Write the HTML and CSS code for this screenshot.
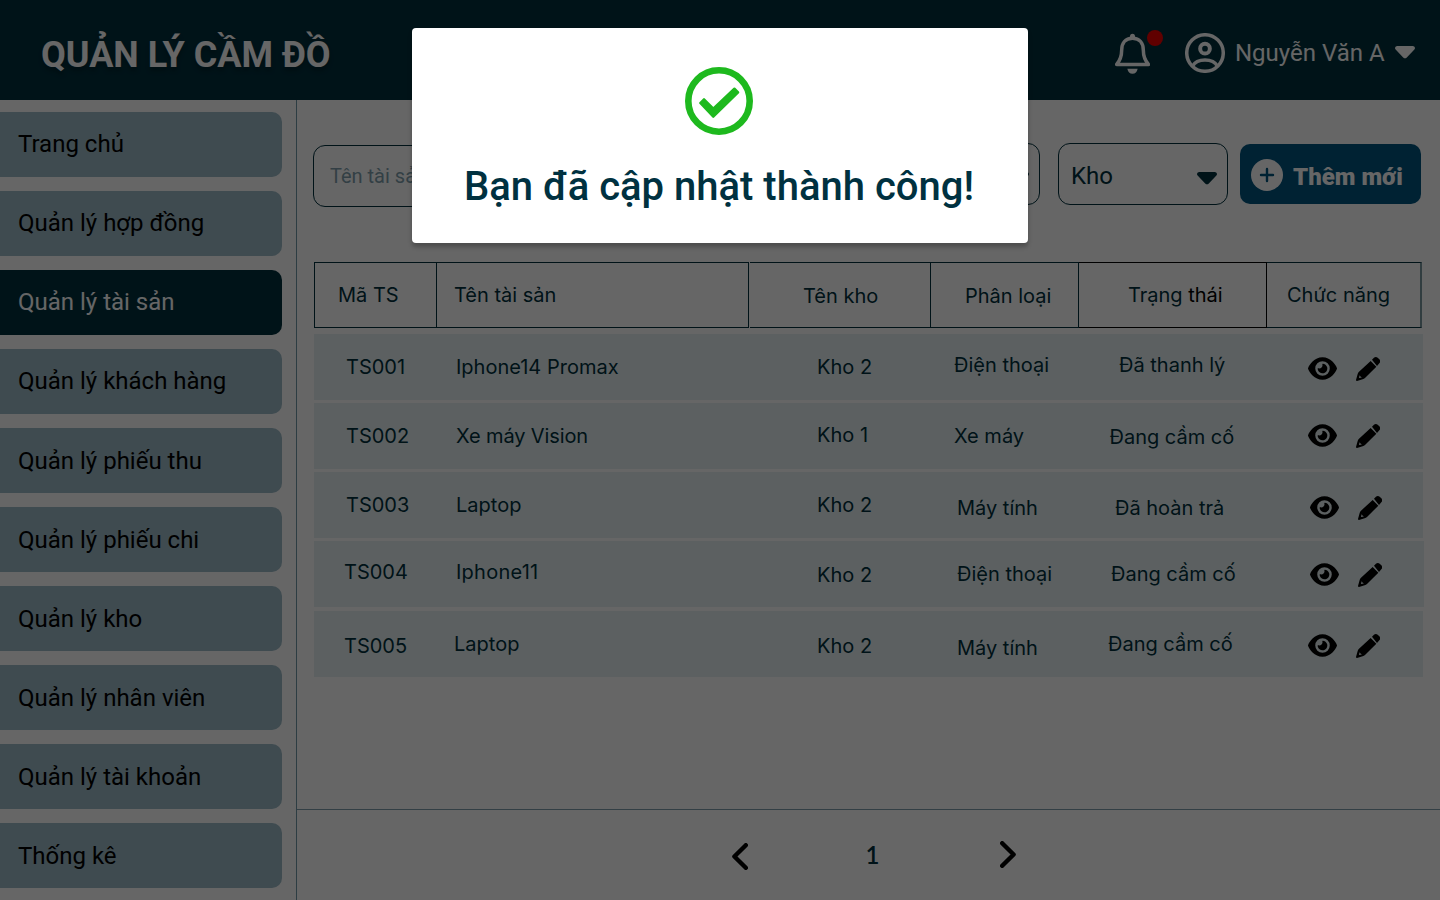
FILE: index.html
```html
<!DOCTYPE html>
<html lang="vi">
<head>
<meta charset="utf-8">
<title>Quản lý cầm đồ</title>
<link rel="stylesheet" href="styles.css">
</head>
<body>
<svg class="sprite" width="0" height="0">
  <symbol id="eye" viewBox="0 32 576 448"><path d="M288 32c-80.800 0-145.500 36.800-192.600 80.600C48.600 156 17.300 208 2.500 243.700c-3.300 7.900-3.300 16.700 0 24.600C17.300 304 48.600 356 95.400 399.400C142.500 443.200 207.200 480 288 480s145.500-36.800 192.600-80.600c46.800-43.500 78.100-95.400 93-131.100c3.300-7.900 3.300-16.700 0-24.600c-14.900-35.700-46.200-87.700-93-131.100C433.500 68.800 368.800 32 288 32zM144 256a144 144 0 1 1 288 0 144 144 0 1 1 -288 0zm144-64c0 35.300-28.700 64-64 64c-7.100 0-13.900-1.200-20.300-3.300c-5.500-1.800-11.900 1.600-11.700 7.400c.3 6.900 1.300 13.800 3.200 20.700c13.700 51.200 66.400 81.600 117.600 67.900s81.600-66.400 67.900-117.600c-11.100-41.500-47.800-69.400-88.600-71.100c-5.800-.2-9.200 6.100-7.400 11.700c2.100 6.400 3.300 13.200 3.300 20.300z"/></symbol>
  <symbol id="pencil" viewBox="0 0 72 72"><path d="M48 8l5-5q6-5 12-1l5 5q5 6 0 12l-7 8z"/><path fill-rule="evenodd" d="M44 12l17 17-34 34q-3 3-7 4L3 72q-3 0-3-3L5 51q1-4 4-7zM11 55l-2 7 2 1 7-2-4-2z"/></symbol>
  <symbol id="caret" viewBox="0 0 20 13"><path d="M2 0h16q2 .3 2 2 0 .8-.6 1.400l-7.600 8q-1.800 1.800-3.600 0l-7.600-8Q0 2.800 0 2 0 .3 2 0z"/></symbol>
</svg>
<div class="app">
  <header class="topbar">
    <h1 class="brand">QUẢN LÝ CẦM ĐỒ</h1>
    <div class="account">
      <div class="bell">
        <svg width="35" height="41" viewBox="75 100 105 123"><path d="M80 194.500H175.500C165 183 160 172 160 152C160 130 149 116 127.500 116S95 130 95 152C95 172 90 183 80 194.500Z" fill="none" stroke="#fff" stroke-width="10.500" stroke-linejoin="round"/><path d="M120 113v-5q1-6 7.500-6t7.500 6v5zM112 207h31q-3 15-15.500 15T112 207z" fill="#fff"/></svg>
        <span class="dot"></span>
      </div>
      <svg class="avatar" width="40" height="40" viewBox="285 99 120 120" fill="none" stroke="#fff" stroke-width="10.500"><circle cx="345" cy="159" r="54.800"/><circle cx="345" cy="146" r="14.500" stroke-width="12"/><path d="M307 199C315 185 330 180 345 180S375 185 383 199"/></svg>
      <span class="username">Nguyễn Văn A</span>
      <svg class="caret" width="20" height="13" fill="#fff"><use href="#caret"/></svg>
    </div>
  </header>
  <div class="body">
    <nav class="sidebar">
      <a class="item">Trang chủ</a>
      <a class="item">Quản lý hợp đồng</a>
      <a class="item active">Quản lý tài sản</a>
      <a class="item">Quản lý khách hàng</a>
      <a class="item">Quản lý phiếu thu</a>
      <a class="item">Quản lý phiếu chi</a>
      <a class="item">Quản lý kho</a>
      <a class="item">Quản lý nhân viên</a>
      <a class="item">Quản lý tài khoản</a>
      <a class="item">Thống kê</a>
    </nav>
    <main class="main">
      <div class="filters">
        <div class="search">Tên tài sản</div>
        <div class="select"><span></span><svg class="caret" width="20" height="13"><use href="#caret"/></svg></div>
        <div class="select kho"><span>Kho</span><svg class="caret" width="20" height="13"><use href="#caret"/></svg></div>
        <div class="add">
          <svg width="32" height="32" viewBox="0 0 32 32"><circle cx="16" cy="16" r="16" fill="#fff"/><path d="M16 10v12M10 16h12" stroke="#005580" stroke-width="2.400" stroke-linecap="round"/></svg>
          <span>Thêm mới</span>
        </div>
      </div>
      <div class="table">
        <div class="thead">
          <div>Mã TS</div><div>Tên tài sản</div><div>Tên kho</div><div>Phân loại</div><div class="dark"><span class="teal">Trạng</span> thái</div><div>Chức năng</div>
        </div>
        <div class="row r1"><div>TS001</div><div>Iphone14 Promax</div><div>Kho 2</div><div>Điện thoại</div><div>Đã thanh lý</div><div class="actions"><svg width="29" height="23"><use href="#eye"/></svg><svg width="24" height="24"><use href="#pencil"/></svg></div></div>
        <div class="row r2"><div>TS002</div><div>Xe máy Vision</div><div>Kho 1</div><div>Xe máy</div><div>Đang cầm cố</div><div class="actions"><svg width="29" height="23"><use href="#eye"/></svg><svg width="24" height="24"><use href="#pencil"/></svg></div></div>
        <div class="row r3"><div>TS003</div><div>Laptop</div><div>Kho 2</div><div>Máy tính</div><div>Đã hoàn trả</div><div class="actions"><svg width="29" height="23"><use href="#eye"/></svg><svg width="24" height="24"><use href="#pencil"/></svg></div></div>
        <div class="row r4"><div>TS004</div><div>Iphone11</div><div>Kho 2</div><div>Điện thoại</div><div>Đang cầm cố</div><div class="actions"><svg width="29" height="23"><use href="#eye"/></svg><svg width="24" height="24"><use href="#pencil"/></svg></div></div>
        <div class="row r5"><div>TS005</div><div>Laptop</div><div>Kho 2</div><div>Máy tính</div><div>Đang cầm cố</div><div class="actions"><svg width="29" height="23"><use href="#eye"/></svg><svg width="24" height="24"><use href="#pencil"/></svg></div></div>
      </div>
      <footer class="pager">
        <svg class="prev" width="16" height="27" viewBox="0 0 16 27"><path d="M13.800 2.200L2.400 13.500l11.400 11.300"/></svg>
        <span class="page">1</span>
        <svg class="next" width="16" height="27" viewBox="0 0 16 27"><path d="M2.200 2.200l11.400 11.300L2.200 24.800"/></svg>
      </footer>
    </main>
  </div>
</div>
<div class="overlay">
  <div class="modal">
    <svg width="68" height="68" viewBox="0 0 68 68"><circle cx="34" cy="34" r="30.700" fill="none" stroke="#1eb91e" stroke-width="6.600"/><path d="M15.300 36l3.700-3.700 9.300 9.300L49.400 21.700l3.700 3.700L28.300 49.700z" fill="#1eb91e" stroke="#1eb91e" stroke-width="2.400" stroke-linejoin="round"/></svg>
    <p class="message">Bạn đã cập nhật thành công!</p>
  </div>
</div>
</body>
</html>
```
FILE: styles.css
```css
* { box-sizing: border-box; }
body { margin: 0; background: #fff; font-family: Roboto, sans-serif; color: #00303d; }
svg { display: block; flex: none; }
.sprite { position: absolute; }
.app { width: 1440px; height: 900px; display: flex; flex-direction: column; overflow: hidden; }

.topbar { height: 100px; flex: none; background: #00303d; color: #fff; display: flex; justify-content: space-between; padding: 0 25px 0 41px; }
.brand { margin: 34px 0 0; font-size: 36px; line-height: 42px; font-weight: 700; text-shadow: 0 4px 4px rgba(0, 0, 0, .25); white-space: nowrap; }
.account { display: flex; align-items: flex-start; }
.bell { position: relative; width: 35px; margin: 33px 35px 0 0; }
.dot { position: absolute; left: 32px; top: -3px; width: 16px; height: 16px; border-radius: 50%; background: #f00000; }
.avatar { margin-top: 33px; }
.username { margin: 39px 0 0 10px; width: 160px; font-size: 24px; line-height: 28px; white-space: nowrap; }
.account .caret { margin-top: 46px; }

.body { flex: 1; display: flex; min-height: 0; }
.sidebar { width: 297px; flex: none; border-right: 1px solid #7099a8; padding: 12px 14px 0 0; display: flex; flex-direction: column; gap: 14px; }
.item { height: 65px; flex: none; border-radius: 0 10px 10px 0; background: #9dbbc8; color: #000; font-size: 24px; line-height: 64px; padding-left: 18px; white-space: nowrap; }
.item:nth-child(n+5) { padding-top: 1px; }
.item.active { background: #00303d; color: #fff; }

.main { flex: 1; display: flex; flex-direction: column; min-width: 0; }
.filters { display: flex; align-items: flex-start; height: 162px; padding: 43px 19px 0 16px; }
.search { width: 537px; height: 62px; margin: 2px 20px 0 0; border: 1px solid #00303d; border-radius: 12px; padding-left: 16px; font-size: 20px; line-height: 60px; color: #7f9fac; }
.select { width: 170px; height: 62px; border: 1px solid #00303d; border-radius: 12px; display: flex; justify-content: space-between; padding: 18px 10px 0 12px; font-size: 24px; line-height: 28px; }
.select .caret { margin-top: 10px; fill: #00303d; }
.select.kho { margin: 0 12px 0 18px; }
.add { width: 181px; height: 60px; margin-top: 1px; border-radius: 10px; background: #005580; color: #fff; display: flex; padding: 15px 0 0 11px; gap: 10px; font-size: 24px; line-height: 36px; font-weight: 900; white-space: nowrap; }

.table { padding-left: 17px; font-family: Inter, sans-serif; font-size: 20px; line-height: 24px; font-weight: 400; flex: 1; white-space: nowrap; }
.thead, .row { display: grid; grid-template-columns: 123px 312px 1px 181px 148px 188px 155px; height: 66px; }
.thead { margin-bottom: 6px; }
.thead > div { border: 1px solid #00303d; border-left: 0; padding-top: 20px; }
.thead > :nth-child(1) { border-left: 1px solid #00303d; padding-left: 23px; }
.thead > :nth-child(2) { padding-left: 17px; }
.thead > :nth-child(3), .row > :nth-child(3) { grid-column: 4; }
.thead > :nth-child(3) { padding: 21px 0 0 53px; }
.thead > :nth-child(4) { padding: 21px 0 0 34px; }
.thead > :nth-child(5) { padding-left: 49px; }
.thead > :nth-child(6) { padding-left: 20px; border-right: 2px solid #7b98a1; }
.thead > .dark { border-color: #000; color: #000; }
.teal { color: #00303d; }

.row { width: 1109px; margin-bottom: 3px; background: #e6f1f3; }
.row > div { padding-top: 21px; }
.row > :nth-child(1) { padding-left: 32px; }
.row > :nth-child(2) { padding-left: 19px; }
.row > :nth-child(3) { padding-left: 67px; }
.row > :nth-child(4) { padding-left: 23px; }
.row > :nth-child(5) { padding-left: 30.500px; }
.row > .actions { display: flex; gap: 19px; padding: 23px 0 0 41px; }

.r1 > :nth-child(4), .r1 > :nth-child(5) { padding-top: 19px; }
.r1 > :nth-child(5) { padding-left: 40px; }
.r2 > :nth-child(2) { letter-spacing: -.12px; }
.r2 > :nth-child(3) { padding-top: 20px; }
.r2 > :nth-child(5) { padding-top: 22px; }
.r2 > .actions { padding-top: 21px; }
.r3 > :nth-child(4), .r3 > :nth-child(5) { padding-top: 24px; }
.r3 > :nth-child(4), .r4 > :nth-child(4), .r5 > :nth-child(4) { padding-left: 26px; }
.r3 > :nth-child(5) { padding-left: 36px; }
.r3 > .actions, .r4 > .actions { padding-left: 43px; }
.r3 > .actions { padding-top: 24px; }
.r4 { width: 1110px; margin-bottom: 4px; }
.r4 > :nth-child(1), .r5 > :nth-child(1) { padding-left: 30px; }
.r4 > :nth-child(1), .r4 > :nth-child(2) { padding-top: 19px; }
.r4 > :nth-child(2) { letter-spacing: .25px; }
.r4 > :nth-child(3) { padding-top: 22px; }
.r4 > :nth-child(5) { padding-left: 32px; }
.r4 > .actions { padding-top: 22px; }
.r5 > :nth-child(1), .r5 > :nth-child(3) { padding-top: 23px; }
.r5 > :nth-child(2) { padding-left: 17px; }
.r5 > :nth-child(4) { padding-top: 25px; }
.r5 > :nth-child(5) { padding-left: 29px; padding-top: 21px; }

.pager { height: 91px; flex: none; border-top: 1px solid #7f9fac; display: flex; padding-left: 435px; }
.pager svg { fill: none; stroke: #000; stroke-width: 4.400; stroke-linecap: round; stroke-linejoin: round; }
.prev { margin-top: 33px; }
.page { margin: 30px 0 0 117.500px; width: 134.500px; font-family: Lato, sans-serif; font-size: 24px; line-height: 29px; font-weight: 600; }
.next { margin-top: 31px; }

.overlay { position: absolute; inset: 0; background: rgba(0, 0, 0, .6); display: flex; justify-content: center; align-items: flex-start; padding-top: 28px; }
.modal { width: 616px; height: 215px; background: #fff; border-radius: 4px; box-shadow: 0 4px 4px rgba(0, 0, 0, .25); display: flex; flex-direction: column; align-items: center; padding: 39px 2px 0 0; }
.message { margin: 28px 0 0; font-size: 40px; line-height: 47px; font-weight: 500; white-space: nowrap; color: #003140; }
```
